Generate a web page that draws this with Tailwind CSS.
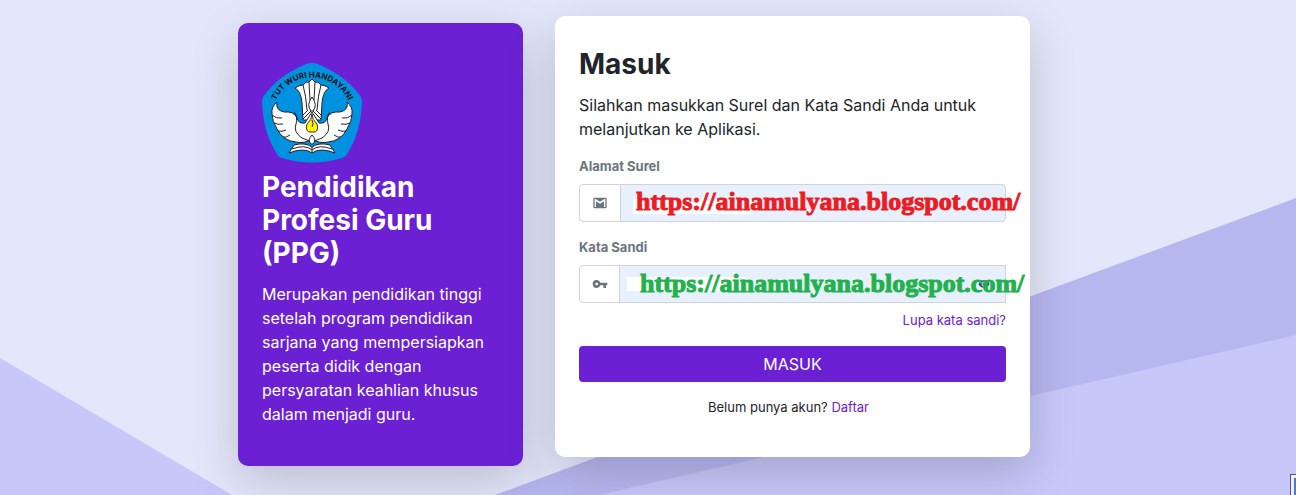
<!DOCTYPE html>
<html lang="id">
<head>
    <meta charset="UTF-8">
    <meta name="viewport" content="width=device-width, initial-scale=1.0">
    <script src="https://cdn.jsdelivr.net/npm/@tailwindcss/browser@4"></script>
    <title>Masuk - PPG</title>
</head>
<body class="relative min-h-screen overflow-hidden bg-[#e4e6fb] font-['Inter',sans-serif] text-[#212529]">
    <!-- Background shapes -->
    <svg class="absolute inset-0 w-full h-full" viewBox="0 0 1296 495" preserveAspectRatio="none" aria-hidden="true">
        <path d="M0 358L232 495H0z" fill="#c7c7f9"/>
        <path d="M1296 198L495 495H1296z" fill="#b7b7f0"/>
        <path d="M1296 335L599 495H1296z" fill="#c7c7f9"/>
    </svg>

    <main class="relative flex items-start justify-center gap-8 pt-4 pr-7">
        <section class="w-[285px] mt-[7px] px-6 py-10 rounded-[10px] bg-[#6b20d4] text-white shadow-[0_16px_48px_rgba(0,0,0,0.175)]">
            <svg class="w-[100px] h-[100px]" viewBox="0 0 100 100" role="img" aria-label="Tut Wuri Handayani">
                <path d="M42 2Q50 -2 58 2Q84 13 99 34Q100 36 100 39Q99 69 85 91Q84 94 80 95Q50 104 20 95Q16 94 15 91Q1 69 0 39Q0 36 1 34Q16 13 42 2z" fill="#0092e0"/>
                <path id="motto" d="M14 37A40 40 0 0 1 86 37" fill="none"/>
                <text font-size="8" font-weight="700" fill="#141414" text-anchor="middle"><textPath href="#motto" startOffset="50%">TUT WURI HANDAYANI</textPath></text>
                <g fill="#fff" stroke="#222" stroke-width="1" stroke-linejoin="round">
                    <path d="M41 57L40 40Q39 28 33 25Q37 22 41 22Q44 18 47 19L50 16L53 19Q56 18 59 22Q63 22 67 25Q61 28 60 40L59 57z"/>
                    <path d="M41 22Q44 32 45 47M47 19L48 37M53 19L52 37M59 22Q56 32 55 47" fill="none"/>
                    <path d="M15 39Q9 44 10 51Q10 58 15 66Q21 78 34 79Q42 81 50 76Q58 81 66 79Q79 78 85 66Q90 58 90 51Q91 44 85 39Q87 47 78 49Q68 48 65 55Q64 61 57 60L50 49L43 60Q36 61 35 55Q32 48 22 49Q13 47 15 39z"/>
                    <path d="M10 52Q14 56 20 55M12 60Q16 62 21 61M16 68Q20 69 24 67M21 74Q24 75 28 72M90 52Q86 56 80 55M88 60Q84 62 79 61M84 68Q80 69 76 67M79 74Q76 75 72 72M32 49Q36 53 34 61Q31 69 40 75L50 79L60 75Q69 69 66 61Q64 53 68 49" fill="none"/>
                    <path d="M50 34Q44 42 49 48H51Q56 42 50 34zM49 48L41 56M51 48L59 56M46 47L40 53M54 47L60 53"/>
                    <path d="M27 90L32 82Q43 79 50 84Q57 79 68 82L73 90Q58 84 50 90Q42 84 27 90z"/>
                    <path d="M30 86Q43 81 50 87Q57 81 70 86M50 84V90" fill="none"/>
                    <path d="M50 72Q45 77 49 81H51Q55 77 50 72z"/>
                </g>
                <path d="M50 51Q50 57 45 61Q43 67 47 69H53Q57 67 55 61Q50 57 50 51z" fill="#fff200" stroke="#333" stroke-width="1"/>
                <path d="M50 57Q52 61 50 64" fill="none" stroke="#333" stroke-width="1"/>
            </svg>
            <h1 class="mt-2 text-[28px] leading-[33px] font-bold">Pendidikan Profesi Guru (PPG)</h1>
            <p class="mt-3 text-base leading-6">Merupakan pendidikan tinggi setelah program pendidikan sarjana yang mempersiapkan peserta didik dengan persyaratan keahlian khusus dalam menjadi guru.</p>
        </section>

        <section class="w-[475px] px-6 pt-8 pb-10 rounded-[10px] bg-white shadow-[0_16px_48px_rgba(0,0,0,0.175)]">
            <h2 class="text-[28px] leading-8 font-bold">Masuk</h2>
            <p class="mt-[13px] text-base leading-6">Silahkan masukkan Surel dan Kata Sandi Anda untuk melanjutkan ke Aplikasi.</p>
            <form class="mt-[15px]">
                <label for="email" class="block text-[13px] leading-5 font-bold text-[#6c757d]">Alamat Surel</label>
                <div class="relative flex h-[38px] mt-2">
                    <span class="flex items-center justify-center w-[42px] border border-[#ced4da] rounded-l bg-white text-[#6c757d]">
                        <svg class="w-4 h-4" viewBox="0 0 24 24" fill="currentColor" aria-hidden="true"><path d="M20 4H4a2 2 0 0 0-2 2v12a2 2 0 0 0 2 2h16a2 2 0 0 0 2-2V6a2 2 0 0 0-2-2m0 14h-2V9.250L12 13 6 9.250V18H4V6h1.200l6.800 4.250L18.800 6H20z"/></svg>
                    </span>
                    <input id="email" type="email" class="min-w-0 flex-1 -ml-px px-3 border border-[#ced4da] rounded-r bg-[#e8f0fe] outline-none">
                    <span class="absolute left-[54px] top-[15px] w-[118px] h-[15px] bg-white"></span>
                    <span class="absolute left-[57px] top-1 text-[26px] leading-7 font-bold font-['Liberation_Serif',serif] text-[#ed1c24] [-webkit-text-stroke:1px_#ed1c24] whitespace-nowrap pointer-events-none">https://ainamulyana.blogspot.com/</span>
                </div>
                <label for="password" class="block mt-[15px] text-[13px] leading-5 font-bold text-[#6c757d]">Kata Sandi</label>
                <div class="relative flex h-[38px] mt-2">
                    <span class="flex items-center justify-center w-[41px] border border-[#ced4da] rounded-l bg-white text-[#6c757d]">
                        <svg class="w-4 h-4" viewBox="0 0 24 24" fill="currentColor" aria-hidden="true"><path d="M7 14a2 2 0 1 1 0-4 2 2 0 0 1 0 4m5.650-4A6 6 0 1 0 7 18a6 6 0 0 0 5.650-4H17v4h4v-4h2v-4z"/></svg>
                    </span>
                    <input id="password" type="password" class="min-w-0 flex-1 -ml-px px-3 border border-[#ced4da] bg-[#e8f0fe] outline-none">
                    <svg class="absolute right-4 top-[13px] w-3 h-3 text-[#3b2ba8]" viewBox="0 0 24 24" fill="currentColor" aria-hidden="true"><path d="M12 9a3 3 0 1 0 0 6 3 3 0 0 0 0-6m0-4.500C7 4.500 2.700 7.600 1 12c1.700 4.400 6 7.500 11 7.500s9.300-3.100 11-7.500c-1.700-4.400-6-7.500-11-7.500M12 17a5 5 0 1 1 0-10 5 5 0 0 1 0 10"/></svg>
                    <span class="absolute left-12 top-3 w-[118px] h-[14px] bg-white"></span>
                    <span class="absolute left-[61px] top-[5px] text-[26px] leading-7 font-bold font-['Liberation_Serif',serif] text-[#22b14c] [-webkit-text-stroke:1px_#22b14c] whitespace-nowrap pointer-events-none">https://ainamulyana.blogspot.com/</span>
                </div>
                <div class="mt-[7px] text-right text-[13px] leading-5">
                    <a href="#" class="text-[#6b20d4]">Lupa kata sandi?</a>
                </div>
                <button type="submit" class="block w-full h-9 mt-4 rounded bg-[#6b20d4] text-base text-white">MASUK</button>
            </form>
            <p class="mt-[15px] pr-2 text-center text-[13px] leading-5">Belum punya akun? <a href="#" class="text-[#6b20d4]">Daftar</a></p>
        </section>
    </main>

    <div class="absolute right-0 bottom-0 w-[6px] h-[21px] border-t border-l border-[#555577] bg-[#eeeeff] pl-[3px] pt-[3px]">
        <div class="w-full h-full bg-[#4a7bd0]"></div>
    </div>
</body>
</html>
